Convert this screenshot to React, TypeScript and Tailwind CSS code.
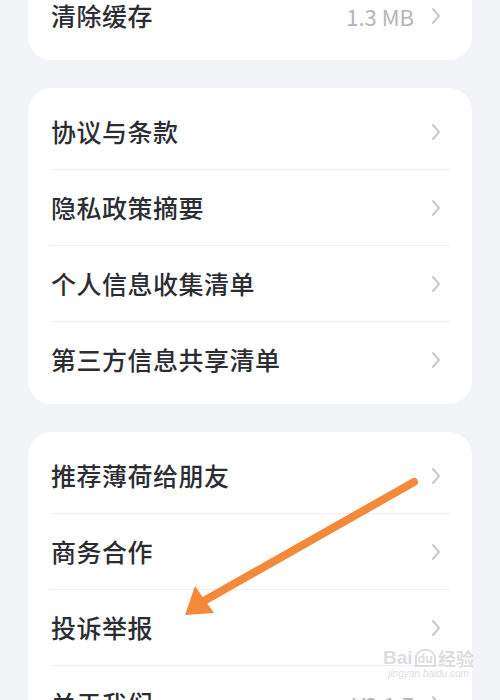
import React from "react";

type Row = { label: string; value?: string };

const groups: Row[][] = [
  [{ label: "清除缓存", value: "1.3 MB" }],
  [
    { label: "协议与条款" },
    { label: "隐私政策摘要" },
    { label: "个人信息收集清单" },
    { label: "第三方信息共享清单" },
  ],
  [
    { label: "推荐薄荷给朋友" },
    { label: "商务合作" },
    { label: "投诉举报" },
    { label: "关于我们", value: "V2.1.7" },
  ],
];

function Chevron() {
  return (
    <svg width="10" height="18" viewBox="0 0 10 18" fill="none">
      <path d="M2 2l6 7-6 7" stroke="#c8c9cd" strokeWidth="2" strokeLinecap="round" strokeLinejoin="round" />
    </svg>
  );
}

function SettingRow({ row, last }: { row: Row; last: boolean }) {
  return (
    <div className="relative flex h-[76px] items-center pl-[23px] pr-[31px]">
      <span className="flex-1 text-[25px] font-medium tracking-[0.5px] text-[#2b2d33]">{row.label}</span>
      {row.value && <span className="mr-[17px] text-[22px] text-[#b4b5b9]">{row.value}</span>}
      <Chevron />
      {!last && <div className="absolute bottom-0 left-[22px] right-[22px] h-px bg-[#eeeff2]" />}
    </div>
  );
}

export default function App() {
  return (
    <div
      className="relative h-[700px] w-[500px] overflow-hidden bg-[#f3f4f8]"
      style={{ fontFamily: '"Noto Sans CJK SC", "Noto Sans", sans-serif' }}
    >
      <div className="mt-[-28px] flex flex-col gap-[28px] px-[28px]">
        {groups.map((group, gi) => (
          <div key={gi} className="rounded-[24px] bg-white py-[6px]">
            {group.map((row, i) => (
              <SettingRow key={row.label} row={row} last={i === group.length - 1} />
            ))}
          </div>
        ))}
      </div>

      {/* annotation arrow */}
      <svg className="absolute left-0 top-0" width="500" height="700" viewBox="0 0 500 700">
        <line x1="414" y1="482" x2="202" y2="602" stroke="#f4893a" strokeWidth="8" strokeLinecap="round" />
        <polygon points="185,615 195,586 214,613" fill="#f4893a" />
      </svg>

      {/* watermark */}
      <div className="absolute left-[383px] top-[648px] flex flex-col items-center text-[#dcdde0]">
        <div className="flex items-end leading-none">
          <span className="text-[19px] font-bold" style={{ fontFamily: '"Liberation Sans", sans-serif' }}>
            Bai
          </span>
          <span className="ml-[2px] rounded-t-[9px] border-2 border-[#dcdde0] px-[1px] text-[12px] font-bold leading-[14px]">
            du
          </span>
          <span className="ml-[2px] text-[18px] font-bold">经验</span>
        </div>
        <span className="mt-[2px] text-[10px] italic leading-none" style={{ fontFamily: '"Liberation Sans", sans-serif' }}>
          jingyan.baidu.com
        </span>
      </div>
    </div>
  );
}
